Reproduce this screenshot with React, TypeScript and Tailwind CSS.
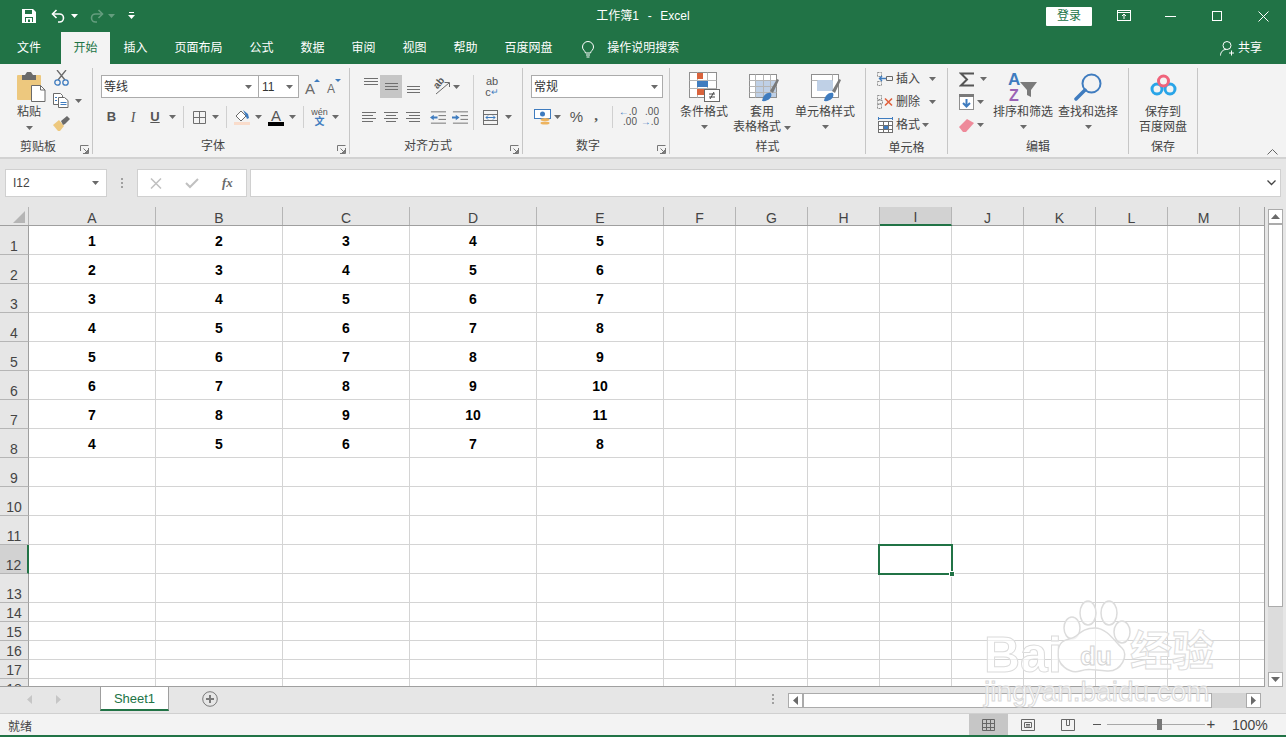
import type { ReactNode } from 'react';

const FONT = "font-['Liberation_Sans','Noto_Sans_CJK_SC',sans-serif]";
const COLS = ['A', 'B', 'C', 'D', 'E', 'F', 'G', 'H', 'I', 'J', 'K', 'L', 'M'];
const DATA = [
  [1, 2, 3, 4, 5],
  [2, 3, 4, 5, 6],
  [3, 4, 5, 6, 7],
  [4, 5, 6, 7, 8],
  [5, 6, 7, 8, 9],
  [6, 7, 8, 9, 10],
  [7, 8, 9, 10, 11],
  [4, 5, 6, 7, 8],
];
const TABS = ['插入', '页面布局', '公式', '数据', '审阅', '视图', '帮助', '百度网盘'];

function Slot({ className, children }: { className: string; children?: ReactNode }) {
  return <div className={`flex shrink-0 items-center justify-center ${className}`}>{children}</div>;
}

function Caret({ light }: { light?: boolean }) {
  return (
    <svg width="7" height="4" viewBox="0 0 7 4">
      <path d="M0 0h7L3.5 4z" fill={light ? '#ffffff' : '#6a6a6a'} />
    </svg>
  );
}

function VSep() {
  return <div className="mx-auto h-[22px] w-px bg-[#d0d0d0]" />;
}

function Launcher() {
  return (
    <svg className="absolute right-[3px] bottom-[0px]" width="9" height="9" viewBox="0 0 9 9" fill="none" stroke="#777777">
      <path d="M.5 6V.5H8.5" />
      <path d="M8.5 3V8.5H3M3.5 3.5L7.5 7.5M7.5 5V7.5H5" />
    </svg>
  );
}

function Group({ className, label, launcher, children }: { className: string; label: string; launcher?: boolean; children: ReactNode }) {
  return (
    <div className={`relative flex h-[86px] shrink-0 flex-col border-r border-[#c6c6c6] ${className}`}>
      <div className="h-[69px]">{children}</div>
      <div className={`mt-[4px] text-center text-[12px] leading-4 text-[#444444] ${launcher ? 'pr-[16px]' : ''}`}>{label}</div>
      {launcher && <Launcher />}
    </div>
  );
}

function BigBtn({ className, icon, lines, caretInline }: { className: string; icon: ReactNode; lines: string[]; caretInline?: boolean }) {
  return (
    <div className={`flex shrink-0 flex-col items-center text-[12px] leading-[15px] text-[#444444] ${className}`}>
      <div className="flex h-[34px] items-end justify-center">{icon}</div>
      <div className="mt-[3px] whitespace-nowrap">{lines[0]}</div>
      {lines[1] ? (
        <div className="flex items-center gap-[3px] whitespace-nowrap">
          {lines[1]}
          {caretInline && <Caret />}
        </div>
      ) : (
        <div className="-mt-[1px] flex h-[15px] items-center">
          <Caret />
        </div>
      )}
    </div>
  );
}

function LineIcon({ rows }: { rows: [number, number][] }) {
  return (
    <svg width="15" height={rows.length * 3 + 1} fill="#6f6f6f">
      {rows.map((r, i) => (
        <rect key={i} x={r[0]} y={i * 3 + 1} width={r[1]} height="1" />
      ))}
    </svg>
  );
}

function IndentIcon({ flip }: { flip?: boolean }) {
  return (
    <svg width="17" height="13" viewBox="0 0 17 13">
      <path d={flip ? 'M8 6.500L4 3.500V5.500H0V7.500H4V9.500z' : 'M0 6.500L4 3.500V5.500H8V7.500H4V9.500z'} fill="#3f7cbf" />
      <path d="M1 .500H17M9 4.500H17M9 8.500H17M1 12.500H17" stroke="#6f6f6f" fill="none" />
    </svg>
  );
}

function TitleBar() {
  return (
    <div className="grid h-[32px] shrink-0 grid-cols-[1fr_auto_1fr] items-center bg-[#217346] text-white">
      <div className="flex items-center pl-[22px]">
        <svg width="14" height="14" viewBox="0 0 14 14">
          <path d="M0 0h11l3 3v11H0z" fill="#ffffff" />
          <path d="M3 1h7v4H3z" fill="#217346" />
          <path d="M3 8h8v5H3z" fill="#217346" />
          <path d="M4 9h6v4H8v-2.500H6V13H4z" fill="#ffffff" />
        </svg>
        <svg className="ml-[15px]" width="15" height="14" viewBox="0 0 15 14" fill="none" stroke="#ffffff" strokeWidth="1.600">
          <path d="M5.500 1L1.500 5l4 4" />
          <path d="M2 5h6.500a4 4 0 0 1 0 8H7" />
        </svg>
        <Slot className="ml-[4px] w-[9px]">
          <Caret light />
        </Slot>
        <svg className="ml-[10px] opacity-30" width="15" height="14" viewBox="0 0 15 14" fill="none" stroke="#ffffff" strokeWidth="1.600">
          <path d="M9.500 1l4 4-4 4" />
          <path d="M13 5H6.500a4 4 0 0 0 0 8H8" />
        </svg>
        <Slot className="ml-[3px] w-[9px] opacity-30">
          <Caret light />
        </Slot>
        <svg className="ml-[12px]" width="7" height="8" viewBox="0 0 7 8" fill="#ffffff">
          <rect x="1" y="0" width="5" height="1" />
          <path d="M0 3h7L3.500 7z" />
        </svg>
      </div>
      <div className="text-[12px] leading-4 whitespace-pre [word-spacing:1px]">工作簿1  -  Excel</div>
      <div className="flex items-center justify-end">
        <div className="mr-[9px] flex h-[19px] w-[46px] items-center justify-center rounded-[1px] bg-white text-[12px] text-[#217346]">登录</div>
        <Slot className="w-[46px]">
          <svg width="14" height="12" viewBox="0 0 14 12" fill="none" stroke="#ffffff">
            <rect x=".5" y=".5" width="13" height="10" />
            <path d="M.5 2.500h13M7 9V4.500M5 6l2-2 2 2" />
          </svg>
        </Slot>
        <Slot className="w-[46px]">
          <div className="h-px w-[11px] bg-white" />
        </Slot>
        <Slot className="w-[47px]">
          <div className="h-[10px] w-[10px] border border-white" />
        </Slot>
        <Slot className="w-[46px]">
          <svg width="11" height="11" viewBox="0 0 11 11" stroke="#ffffff">
            <path d="M.5.500l10 10M10.500.500l-10 10" />
          </svg>
        </Slot>
      </div>
    </div>
  );
}

function TabRow() {
  return (
    <div className="flex h-[32px] shrink-0 items-stretch bg-[#217346] pl-[4px] text-[12px] text-white">
      <div className="flex w-[50px] items-center justify-center">文件</div>
      <div className="ml-[7px] flex w-[49px] items-center justify-center bg-[#f3f3f3] text-[#217346]">开始</div>
      {TABS.map((t) => (
        <div key={t} className="flex items-center px-[13.500px] whitespace-nowrap">
          {t}
        </div>
      ))}
      <svg className="mt-[9px] ml-[15px]" width="14" height="17" viewBox="0 0 14 17" fill="none" stroke="#ffffff">
        <path d="M4.500 12C4 9.500 1.500 9 1.500 6a5.500 5.500 0 0 1 11 0c0 3-2.500 3.500-3 6z" />
        <path d="M5 14h4M5.500 16h3" />
      </svg>
      <div className="ml-[12px] flex items-center whitespace-nowrap">操作说明搜索</div>
      <div className="ml-auto flex items-center pr-[24px]">
        <svg width="15" height="15" viewBox="0 0 15 15" fill="none" stroke="#ffffff">
          <circle cx="7" cy="4.500" r="4" />
          <path d="M.5 14.500c0-3.500 2.500-6 5.500-6M11.500 9.500v5M9 12h5" />
        </svg>
        <span className="ml-[3px]">共享</span>
      </div>
    </div>
  );
}

function ClipboardGroup() {
  return (
    <Group className="w-[93px]" label="剪贴板" launcher>
      <div className="flex pl-[17px]">
        <div className="flex w-[24px] flex-col items-center text-[12px] leading-[15px] text-[#444444]">
          <svg className="mt-[4px] ml-[5px] shrink-0" width="29" height="30" viewBox="0 0 29 30">
            <rect x="0" y="3" width="24" height="25" rx="1" fill="#edc87e" />
            <path d="M5 3h3l2-3h4l2 3h3v5H5z" fill="#6a6a6a" />
            <path d="M14.500 13.500h9l4.500 4.500v11.500H14.500z" fill="#ffffff" stroke="#6a6a6a" />
            <path d="M23.500 13.500V18H28" fill="none" stroke="#6a6a6a" />
          </svg>
          <span className="mt-[3px] whitespace-nowrap">粘贴</span>
          <div className="flex h-[15px] items-center">
            <Caret />
          </div>
        </div>
        <div className="ml-[12px] flex flex-col">
          <svg className="mt-[2px] ml-[1px]" width="15" height="16" viewBox="0 0 15 16" fill="none">
            <path d="M3 0l8 10M12 0L4 10" stroke="#6a6a6a" strokeWidth="1.300" />
            <circle cx="3.500" cy="12.500" r="2.700" stroke="#3f7cbf" strokeWidth="1.300" />
            <circle cx="11.500" cy="12.500" r="2.700" stroke="#3f7cbf" strokeWidth="1.300" />
          </svg>
          <div className="mt-[7px] flex items-center">
            <svg width="16" height="15" viewBox="0 0 16 15" fill="#ffffff" stroke="#6a6a6a">
              <path d="M.5.500h7l2 2v9H.5z" />
              <path d="M5.500 4.500h6l3.500 3v7H5.500z" />
              <path d="M2 4.500h2M2 7.500h2M7.500 9.500h6M7.500 11.500h6" stroke="#3f7cbf" />
            </svg>
            <span className="ml-[6px]">
              <Caret />
            </span>
          </div>
          <svg className="mt-[8px]" width="18" height="16" viewBox="0 0 18 16">
            <path d="M0 9l6-5 5 6-4 5H5z" fill="#edc87e" />
            <path d="M8 5l6-5 3 3-5 5-2 1z" fill="#6a6a6a" />
          </svg>
        </div>
      </div>
    </Group>
  );
}

function FontGroup() {
  return (
    <Group className="w-[257px]" label="字体" launcher>
      <div className="pl-[8px]">
        <div className="mt-[7px] flex items-center">
          <div className="flex h-[23px] w-[158px] items-center justify-between border border-[#ababab] bg-white pr-[6px] pl-[2px] text-[12px] text-[#333333]">
            等线
            <Caret />
          </div>
          <div className="-ml-px flex h-[23px] w-[41px] items-center justify-between border border-[#ababab] bg-white pr-[5px] pl-[3px] text-[12px] text-[#333333]">
            11
            <Caret />
          </div>
          <div className="relative ml-[6px] h-[16px] w-[15px] text-[#6a6a6a]">
            <span className="absolute top-[2px] left-0 text-[15px] leading-[15px]">A</span>
            <svg className="absolute top-0 right-0" width="6" height="3" viewBox="0 0 6 3">
              <path d="M0 3l3-3 3 3z" fill="#3f7cbf" />
            </svg>
          </div>
          <div className="relative ml-[7px] h-[16px] w-[14px] text-[#6a6a6a]">
            <span className="absolute top-[4px] left-0 text-[12px] leading-[12px]">A</span>
            <svg className="absolute top-0 right-0" width="6" height="3" viewBox="0 0 6 3">
              <path d="M0 0h6L3 3z" fill="#3f7cbf" />
            </svg>
          </div>
        </div>
        <div className="mt-[8px] flex h-[22px] items-center text-[#555555]">
          <Slot className="w-[21px] text-[13px] font-bold">B</Slot>
          <Slot className="w-[22px] font-['Liberation_Serif'] text-[14px] italic">I</Slot>
          <Slot className="w-[22px] text-[13px] font-bold underline">U</Slot>
          <Slot className="w-[12px]"><Caret /></Slot>
          <Slot className="w-[10px]"><VSep /></Slot>
          <Slot className="w-[22px]">
            <svg width="13" height="13" viewBox="0 0 13 13" fill="none" stroke="#6f6f6f">
              <path d="M.5.500h12v12H.5zM6.500.500v12M.5 6.500h12" />
            </svg>
          </Slot>
          <Slot className="w-[10px]"><Caret /></Slot>
          <Slot className="w-[12px]"><VSep /></Slot>
          <Slot className="w-[20px]">
            <svg width="16" height="16" viewBox="0 0 16 16">
              <path d="M2 7l5-5 5 5-5 5z" fill="#ffffff" stroke="#6a6a6a" />
              <path d="M9 1l5 4 1 4-2 1-2-5z" fill="#3f7cbf" />
              <rect x="0" y="13" width="16" height="3" fill="#f9dccb" />
            </svg>
          </Slot>
          <Slot className="w-[12px]"><Caret /></Slot>
          <Slot className="w-[24px]">
            <div className="flex w-[16px] flex-col items-center">
              <span className="h-[13px] text-[15px] leading-[13px] text-[#555555]">A</span>
              <div className="h-[4px] w-[16px] bg-black" />
            </div>
          </Slot>
          <Slot className="w-[9px]"><Caret /></Slot>
          <Slot className="w-[12px]"><VSep /></Slot>
          <Slot className="w-[21px]">
            <div className="flex flex-col items-center leading-[10px]">
              <span className="text-[9px] text-[#555555]">wén</span>
              <span className="text-[10px] font-bold text-[#3f7cbf]">文</span>
            </div>
          </Slot>
          <Slot className="w-[10px]"><Caret /></Slot>
        </div>
      </div>
    </Group>
  );
}

function AlignGroup() {
  return (
    <Group className="w-[173px]" label="对齐方式" launcher>
      <div className="pl-[12px]">
        <div className="mt-[7px] flex h-[23px]">
          <Slot className="w-[18px] items-start pt-[2px]">
            <LineIcon rows={[[0, 14], [0, 14], [0, 14]]} />
          </Slot>
          <Slot className="w-[22px] bg-[#c6c6c6]">
            <LineIcon rows={[[1, 13], [1, 13], [1, 13]]} />
          </Slot>
          <Slot className="w-[22px] items-end pb-[3px]">
            <LineIcon rows={[[1, 13], [1, 13], [1, 13]]} />
          </Slot>
          <Slot className="ml-[6px] w-[21px]">
            <div className="relative h-[18px] w-[18px] text-[#555555]">
              <span className="absolute top-0 left-[1px] origin-center -rotate-[50deg] text-[10px] leading-[10px] font-bold">ab</span>
              <svg className="absolute top-[2px] left-[3px]" width="15" height="15" viewBox="0 0 15 15" fill="none" stroke="#6a6a6a">
                <path d="M1 14L14 3M9.500 2.500H14.500V7" />
              </svg>
            </div>
          </Slot>
          <Slot className="w-[10px]"><Caret /></Slot>
          <Slot className="w-[24px]"><div className="h-[55px] w-px translate-y-[16px] bg-[#d0d0d0]" /></Slot>
          <Slot className="w-[14px] flex-col text-[#555555]">
            <span className="text-[11px] leading-[11px]">ab</span>
            <span className="flex items-center text-[11px] leading-[11px]">c<span className="text-[9px] text-[#3f7cbf]">↵</span></span>
          </Slot>
        </div>
        <div className="mt-[8px] flex h-[22px] items-center">
          <Slot className="w-[14px]"><LineIcon rows={[[0, 14], [0, 11], [0, 14], [0, 11]]} /></Slot>
          <Slot className="ml-[8px] w-[14px]"><LineIcon rows={[[0, 14], [2, 10], [0, 14], [2, 10]]} /></Slot>
          <Slot className="ml-[8px] w-[14px]"><LineIcon rows={[[0, 14], [3, 11], [0, 14], [3, 11]]} /></Slot>
          <Slot className="ml-[10px] w-[16px]"><IndentIcon /></Slot>
          <Slot className="ml-[6px] w-[16px]"><IndentIcon flip /></Slot>
          <Slot className="ml-[15px] w-[15px]">
            <svg width="15" height="15" viewBox="0 0 15 15" fill="none" stroke="#6f6f6f">
              <rect x=".5" y=".5" width="14" height="14" />
              <path d="M.5 4.500h14M.5 10.500h14" />
              <path d="M3 7.500h9M5 5.500l-2 2 2 2M10 5.500l2 2-2 2" stroke="#3f7cbf" />
            </svg>
          </Slot>
          <Slot className="ml-[6px] w-[8px]"><Caret /></Slot>
        </div>
      </div>
    </Group>
  );
}

function NumberGroup() {
  return (
    <Group className="w-[147px]" label="数字" launcher>
      <div className="pl-[8px]">
        <div className="mt-[7px] flex h-[23px] w-[132px] items-center justify-between border border-[#ababab] bg-white pr-[4px] pl-[2px] text-[12px] text-[#333333]">
          常规
          <Caret />
        </div>
        <div className="mt-[8px] flex h-[22px] items-center">
          <Slot className="ml-[3px] w-[17px]">
            <svg width="17" height="16" viewBox="0 0 17 16">
              <rect x=".5" y=".5" width="16" height="9" fill="#ffffff" stroke="#3f7cbf" />
              <circle cx="8.500" cy="5" r="2.500" fill="#3f7cbf" />
              <ellipse cx="11" cy="10.500" rx="4.500" ry="1.500" fill="#edb35e" />
              <ellipse cx="11" cy="14" rx="4.500" ry="1.500" fill="#edb35e" />
            </svg>
          </Slot>
          <Slot className="ml-[3px] w-[7px]"><Caret /></Slot>
          <Slot className="ml-[8px] w-[15px] text-[15px] text-[#555555]">%</Slot>
          <Slot className="ml-[7px] w-[10px] -translate-y-[2px] font-['Liberation_Serif'] text-[15px] font-bold text-[#555555]">,</Slot>
          <Slot className="ml-[11px] w-[1px]"><VSep /></Slot>
          <Slot className="ml-[6px] w-[18px] flex-col text-[10px] leading-[10px] text-[#555555]">
            <span className="self-end"><span className="text-[#3f7cbf]">←</span>.0</span>
            <span className="self-end">.00</span>
          </Slot>
          <Slot className="ml-[4px] w-[18px] flex-col text-[10px] leading-[10px] text-[#555555]">
            <span className="self-end">.00</span>
            <span className="self-end"><span className="text-[#3f7cbf]">→</span>.0</span>
          </Slot>
        </div>
      </div>
    </Group>
  );
}

function StylesGroup() {
  return (
    <Group className="w-[196px]" label="样式">
      <div className="flex pl-[9px]">
        <BigBtn
          className="w-[50px]"
          lines={['条件格式']}
          icon={
            <svg width="31" height="30" viewBox="0 0 31 30">
              <rect x=".5" y=".5" width="27" height="25" fill="#ffffff" stroke="#8f8f8f" />
              <path d="M.5 8.500h27M.5 16.500h27M8.500.500v25M18.500.500v25" stroke="#b5b5b5" />
              <rect x="8" y="1" width="6" height="6" fill="#d9633c" />
              <rect x="8" y="9" width="11" height="6" fill="#3f7cbf" />
              <rect x="8" y="17" width="9" height="6" fill="#d9633c" />
              <rect x="15.500" y="17.500" width="15" height="12" fill="#ffffff" stroke="#6a6a6a" />
              <path d="M20 22h6M20 25h6M25 20l-4 7" stroke="#444444" fill="none" />
            </svg>
          }
        />
        <BigBtn
          className="ml-[4px] w-[58px]"
          lines={['套用', '表格格式']}
          caretInline
          icon={
            <svg className="translate-x-[2px]" width="30" height="30" viewBox="0 0 30 30">
              <rect x=".5" y="2.500" width="27" height="23" fill="#ffffff" stroke="#8f8f8f" />
              <rect x="6" y="8" width="21" height="17" fill="#bfd0e6" />
              <path d="M.5 8.500h27M.5 14.500h27M.5 20.500h27M6.500 2.500v23M14.500 2.500v23M21.500 2.500v23" stroke="#b5b5b5" />
              <path d="M21 19l7-12 2 1-6 13z" fill="#7a7a7a" />
              <path d="M13 29c1-6 5-9 9-8 2 4-3 9-9 8z" fill="#3f7cbf" />
            </svg>
          }
        />
        <BigBtn
          className="ml-[4px] w-[60px]"
          lines={['单元格样式']}
          icon={
            <svg className="translate-x-[1px]" width="30" height="30" viewBox="0 0 30 30">
              <rect x=".5" y="2.500" width="27" height="23" fill="#ffffff" stroke="#8f8f8f" />
              <rect x="6" y="8" width="16" height="11" fill="#bfd0e6" />
              <path d="M.5 8.500h6M21.500 2.500v6" stroke="#b5b5b5" />
              <path d="M21 19l7-12 2 1-6 13z" fill="#7a7a7a" />
              <path d="M13 29c1-6 5-9 9-8 2 4-3 9-9 8z" fill="#3f7cbf" />
            </svg>
          }
        />
      </div>
    </Group>
  );
}

function CellRow({ icon, label, caretClass }: { icon: ReactNode; label: string; caretClass: string }) {
  return (
    <div className="flex h-[23px] items-center text-[12px] text-[#444444]">
      <Slot className="w-[16px]">{icon}</Slot>
      <span className="ml-[3px] whitespace-nowrap">{label}</span>
      <span className={`flex ${caretClass}`}>
        <Caret />
      </span>
    </div>
  );
}

function CellsGroup() {
  return (
    <Group className="w-[82px]" label="单元格">
      <div className="-mt-px pl-[11px]">
        <CellRow
          label="插入"
          caretClass="ml-[9px]"
          icon={
            <svg width="16" height="14" viewBox="0 0 16 14" fill="none">
              <path d="M.5.500h4v4h-4zM.5 9.500h4v4h-4z" stroke="#8f8f8f" strokeDasharray="2 1" />
              <path d="M9.500 4.500h6v4h-6z" stroke="#6a6a6a" />
              <path d="M9 6.500H2.500M5 4L2.500 6.500 5 9" stroke="#3f7cbf" strokeWidth="1.400" />
            </svg>
          }
        />
        <CellRow
          label="删除"
          caretClass="ml-[9px]"
          icon={
            <svg width="16" height="14" viewBox="0 0 16 14" fill="none">
              <path d="M.5.500h4v4h-4zM.5 9.500h4v4h-4zM.5 5.500h5v3h-5z" stroke="#8f8f8f" strokeDasharray="2 1" />
              <path d="M8 3.500l7 7M15 3.500l-7 7" stroke="#e0603c" strokeWidth="1.600" />
            </svg>
          }
        />
        <CellRow
          label="格式"
          caretClass="ml-[2px]"
          icon={
            <svg width="15" height="16" viewBox="0 0 15 16" fill="none" stroke="#6f6f6f">
              <path d="M.5 1.500h14M.5 0v3M14.500 0v3" stroke="#3f7cbf" />
              <rect x=".5" y="4.500" width="14" height="11" fill="#ffffff" />
              <path d="M.5 8.500h14M.5 12.500h14M5.500 4.500v11M10.500 4.500v11" />
              <rect x="6" y="9" width="4" height="3" fill="#3f7cbf" stroke="none" />
            </svg>
          }
        />
      </div>
    </Group>
  );
}

function EditGroup() {
  return (
    <Group className="w-[181px]" label="编辑">
      <div className="flex pl-[11px]">
        <div className="flex w-[35px] flex-col">
          <div className="mt-[1px] flex h-[20px] items-center">
            <svg width="16" height="15" viewBox="0 0 16 15" fill="none" stroke="#555555" strokeWidth="2">
              <path d="M15 1.500H2L8 7.500l-6 6h13" />
            </svg>
            <span className="ml-[5px] flex"><Caret /></span>
          </div>
          <div className="mt-[3px] flex h-[20px] items-center">
            <svg width="15" height="16" viewBox="0 0 15 16">
              <rect x=".5" y=".5" width="14" height="15" fill="#ffffff" stroke="#8f8f8f" />
              <rect x="0" y="0" width="15" height="3" fill="#7a7a7a" />
              <path d="M7.500 5v7M4 9l3.500 3.500L11 9" fill="none" stroke="#3f7cbf" strokeWidth="2" />
            </svg>
            <span className="ml-[3px] flex"><Caret /></span>
          </div>
          <div className="mt-[3px] flex h-[20px] items-center">
            <svg width="15" height="13" viewBox="0 0 15 13">
              <path d="M0 8l8-8 7 4-8 9H4z" fill="#ee8a9a" />
            </svg>
            <span className="ml-[3px] flex"><Caret /></span>
          </div>
        </div>
        <BigBtn
          className="w-[62px] -translate-x-[2px]"
          lines={['排序和筛选']}
          icon={
            <div className="relative h-[30px] w-[30px]">
              <span className="absolute top-0 left-0 text-[17px] leading-[16px] font-bold text-[#3f7cbf]">A</span>
              <span className="absolute top-[17px] left-[1px] text-[16px] leading-[13px] font-bold text-[#9a62b5]">Z</span>
              <svg className="absolute top-0 left-0" width="30" height="30" viewBox="0 0 30 30">
                <path d="M12 10h17l-6 8v7l-4-2v-5z" fill="#7a7a7a" />
              </svg>
            </div>
          }
        />
        <BigBtn
          className="ml-[1px] w-[62px]"
          lines={['查找和选择']}
          icon={
            <svg width="28" height="29" viewBox="0 0 28 29" fill="none" stroke="#3f7cbf">
              <circle cx="17.500" cy="10.500" r="9" strokeWidth="2" />
              <path d="M11 17L2 26" strokeWidth="3.500" strokeLinecap="round" />
            </svg>
          }
        />
      </div>
    </Group>
  );
}

function SaveGroup() {
  return (
    <Group className="w-[69px]" label="保存">
      <BigBtn
        className="w-[68px]"
        lines={['保存到', '百度网盘']}
        icon={
          <svg className="mb-[6px]" width="27" height="22" viewBox="0 0 27 22" fill="none" strokeWidth="3">
            <circle cx="7" cy="15" r="5" stroke="#2aa5e8" />
            <circle cx="20" cy="15" r="5" stroke="#2aa5e8" />
            <circle cx="13.500" cy="7" r="5" stroke="#f0637b" />
          </svg>
        }
      />
    </Group>
  );
}

function Ribbon() {
  return (
    <div className="relative flex h-[95px] shrink-0 border-b-2 border-[#d2d2d2] bg-[#f3f3f3] pt-[4px]">
      <ClipboardGroup />
      <FontGroup />
      <AlignGroup />
      <NumberGroup />
      <StylesGroup />
      <CellsGroup />
      <EditGroup />
      <SaveGroup />
      <svg className="absolute right-[8px] bottom-[2px]" width="11" height="6" viewBox="0 0 11 6" fill="none" stroke="#666666">
        <path d="M.5 5.500l5-5 5 5" />
      </svg>
    </div>
  );
}

function FormulaBar() {
  return (
    <div className="flex h-[48px] shrink-0 items-start bg-[#e6e6e6] pt-[10px]">
      <div className="ml-[5px] flex h-[28px] w-[102px] items-center justify-between border border-[#d0d0d0] bg-white pr-[7px] pl-[7px] text-[12px] text-[#444444]">
        I12
        <Caret />
      </div>
      <Slot className="h-[28px] w-[30px] flex-col gap-[2px]">
        <div className="h-[2px] w-[2px] bg-[#a0a0a0]" />
        <div className="h-[2px] w-[2px] bg-[#a0a0a0]" />
        <div className="h-[2px] w-[2px] bg-[#a0a0a0]" />
      </Slot>
      <div className="flex h-[28px] w-[110px] items-center border border-[#d0d0d0] bg-white">
        <svg className="ml-[12px]" width="12" height="11" viewBox="0 0 12 11" fill="none" stroke="#c0c0c0" strokeWidth="1.500">
          <path d="M1 .5l10 10M11 .5l-10 10" />
        </svg>
        <svg className="ml-[23px]" width="14" height="11" viewBox="0 0 14 11" fill="none" stroke="#c0c0c0" strokeWidth="2">
          <path d="M1 5l4 4 8-8" />
        </svg>
        <span className="ml-[23px] font-['Liberation_Serif'] text-[13px] font-bold text-[#6a6a6a] italic">fx</span>
      </div>
      <div className="ml-[3px] flex h-[28px] w-[1031px] items-center justify-end border border-[#d0d0d0] bg-white pr-[4px]">
        <svg width="9" height="6" viewBox="0 0 9 6" fill="none" stroke="#444444" strokeWidth="1.300">
          <path d="M.5.500l4 4 4-4" />
        </svg>
      </div>
    </div>
  );
}

const colW = (i: number) => (i < 5 ? 'w-[127px]' : 'w-[72px]');

function Sheet() {
  const rows = Array.from({ length: 18 }, (_, i) => i + 1);
  return (
    <div className="relative flex h-[480px] w-[1265px] shrink-0 flex-col overflow-hidden border-r border-b border-[#a0a0a0] bg-white">
      <div className="flex h-[19px] shrink-0 border-b border-[#9f9f9f] bg-[#e6e6e6]">
        <div className="flex w-[29px] shrink-0 items-end justify-end border-r border-[#b5b5b5] pr-[3px] pb-[2px]">
          <div className="h-0 w-0 border-b-[12px] border-l-[12px] border-b-[#b5b5b5] border-l-transparent" />
        </div>
        {COLS.map((c, i) => (
          <div
            key={c}
            className={`flex shrink-0 items-center justify-center border-r border-[#b5b5b5] pt-[4px] text-[14px] leading-[15px] text-[#444444] ${colW(i)} ${c === 'I' ? '-mb-px border-b-2 border-b-[#217346] bg-[#d2d2d2]' : ''}`}
          >
            {c}
          </div>
        ))}
        <div className="flex-1" />
      </div>
      {rows.map((r) => (
        <div key={r} className={`flex shrink-0 ${r <= 13 ? 'h-[29px]' : 'h-[19px]'}`}>
          <div
            className={`flex w-[29px] shrink-0 items-end justify-center border-r border-b border-r-[#9f9f9f] text-[14px] leading-4 text-[#444444] ${r === 12 ? 'border-r-2 border-b-[#b5b5b5] border-r-[#217346] bg-[#d2d2d2]' : 'border-b-[#b5b5b5] bg-[#e6e6e6]'}`}
          >
            {r}
          </div>
          {COLS.map((c, i) => (
            <div
              key={c}
              className={`flex shrink-0 items-center justify-center border-r border-b border-[#d4d4d4] pt-[3px] text-[14px] font-bold text-black ${colW(i)}`}
            >
              {DATA[r - 1]?.[i]}
            </div>
          ))}
          <div className="flex-1 border-b border-[#d4d4d4]" />
        </div>
      ))}
      {/* active cell I12 */}
      <div className="absolute top-[337px] left-[878px] h-[31px] w-[75px] border-2 border-[#217346]">
        <div className="absolute -right-[4px] -bottom-[4px] h-[6px] w-[6px] border border-white bg-[#217346]" />
      </div>
    </div>
  );
}

function ScrollButton({ dir }: { dir: 'up' | 'down' | 'left' | 'right' }) {
  const path = { up: 'M0 5h9L4.500 0z', down: 'M0 0h9L4.500 5z', left: 'M5 0v9L0 4.500z', right: 'M0 0v9l5-4.500z' }[dir];
  return (
    <div className="flex h-[15px] w-[15px] shrink-0 items-center justify-center border border-[#ababab] bg-white">
      <svg width="9" height="9" viewBox="0 0 9 9" className="overflow-visible">
        <path d={path} fill="#6a6a6a" transform={dir === 'up' || dir === 'down' ? 'translate(0 2)' : 'translate(2 0)'} />
      </svg>
    </div>
  );
}

function VScroll() {
  return (
    <div className="ml-[3px] flex h-[480px] w-[15px] flex-col pt-[2px]">
      <ScrollButton dir="up" />
      <div className="flex flex-1 flex-col bg-[#dcdcdc]">
        <div className="h-[383px] w-[15px] border border-[#ababab] bg-white" />
      </div>
      <ScrollButton dir="down" />
    </div>
  );
}

function SheetBar() {
  return (
    <div className="flex h-[27px] shrink-0 items-start border-b border-[#d0d0d0] bg-[#e6e6e6]">
      <Slot className="h-[24px] w-[100px] justify-start">
        <svg className="ml-[27px]" width="34" height="9" viewBox="0 0 34 9" fill="#c6c6c6">
          <path d="M5 0v9L0 4.500z" />
          <path d="M29 0v9l5-4.500z" />
        </svg>
      </Slot>
      <div className="flex h-[24px] w-[69px] items-center justify-center border-x border-b-2 border-x-[#9f9f9f] border-b-[#217346] bg-white pt-[2px] text-[13px] text-[#217346]">
        Sheet1
      </div>
      <svg className="mt-[4px] ml-[33px]" width="16" height="16" viewBox="0 0 16 16" fill="none" stroke="#7a7a7a">
        <circle cx="8" cy="8" r="7.300" />
        <path d="M8 4v8M4 8h8" strokeWidth="2" />
      </svg>
      <Slot className="mt-[4px] ml-[553px] h-[16px] w-[3px] flex-col gap-[2px]">
        <div className="h-[2px] w-[2px] bg-[#a0a0a0]" />
        <div className="h-[2px] w-[2px] bg-[#a0a0a0]" />
        <div className="h-[2px] w-[2px] bg-[#a0a0a0]" />
      </Slot>
      <div className="mt-[6px] ml-[14px] flex h-[15px] w-[473px] bg-[#d4d4d4]">
        <ScrollButton dir="left" />
        <div className="h-[15px] w-[409px] border border-[#ababab] bg-white" />
        <div className="flex-1" />
        <ScrollButton dir="right" />
      </div>
    </div>
  );
}

function StatusBar() {
  return (
    <div className="flex h-[23px] shrink-0 items-stretch border-b-2 border-[#217346] bg-[#f3f3f3] text-[12px] text-[#444444]">
      <div className="flex items-center pt-[4px] pl-[8px]">就绪</div>
      <div className="ml-auto flex items-center">
        <Slot className="h-[21px] w-[39px] bg-[#c6c6c6]">
          <svg width="13" height="12" viewBox="0 0 13 12" fill="none" stroke="#666666">
            <path d="M.5.500h12v11H.5zM4.500.500v11M8.500.500v11M.5 4.500h12M.5 8.500h12" />
          </svg>
        </Slot>
        <Slot className="h-[21px] w-[40px]">
          <svg width="14" height="12" viewBox="0 0 14 12" fill="none" stroke="#666666">
            <path d="M.5.500h13v11H.5zM3.500 3.500h7v5h-7zM5 5.500h4M5 7h4" />
          </svg>
        </Slot>
        <Slot className="h-[21px] w-[40px]">
          <svg width="14" height="12" viewBox="0 0 14 12" fill="none" stroke="#666666">
            <path d="M.5.500h13v11H.5zM5.500.500v6h3v-6" />
          </svg>
        </Slot>
        <div className="ml-[5px] h-px w-[8px] bg-[#555555]" />
        <div className="relative ml-[6px] h-px w-[98px] bg-[#a8a8a8]">
          <div className="absolute top-[-5px] left-[50px] h-[11px] w-[5px] bg-[#777777]" />
        </div>
        <Slot className="h-[21px] w-[12px] text-[15px] font-light">+</Slot>
        <div className="ml-[15px] w-[38px] pt-[2px] text-[14px]">100%</div>
        <div className="w-[16px]" />
      </div>
    </div>
  );
}

function Watermark() {
  return (
    <div className={`pointer-events-none absolute top-[598px] left-[984px] h-[112px] w-[234px] ${FONT}`}>
      <svg className="absolute top-0 left-[56px]" width="100" height="78" viewBox="0 0 100 78" fill="#ffffff" fillOpacity="0.6" stroke="#dcdcdc" strokeWidth="1.500">
        <ellipse cx="48" cy="15" rx="8" ry="12" />
        <ellipse cx="69" cy="15" rx="8" ry="12" />
        <ellipse cx="32" cy="30" rx="8" ry="11" />
        <ellipse cx="82" cy="34" rx="8" ry="11" />
        <path d="M55 30c12 0 20 14 27 20s0 24-15 23-17-3-27 0-24-6-22-20 12-10 18-15 10-8 19-8z" />
      </svg>
      <div className="absolute top-[39px] left-0 text-[50px] leading-[36px] font-bold text-white/60 [-webkit-text-stroke:1px_#dcdcdc]">Bai</div>
      <div className="absolute top-[45px] left-[96px] text-[26px] leading-[26px] font-bold text-white/40 [-webkit-text-stroke:1px_#d4d4d4]">du</div>
      <div className="absolute top-[34px] left-[146px] text-[42px] leading-[40px] font-bold text-white/70 [-webkit-text-stroke:1px_#dcdcdc]">经验</div>
      <div className="absolute top-[80px] left-0 text-[28px] leading-[28px] text-white/70 [-webkit-text-stroke:1px_#d8d8d8]">jingyan.baidu.com</div>
    </div>
  );
}

export default function App() {
  return (
    <div className={`relative flex h-screen w-full flex-col overflow-hidden bg-[#e6e6e6] ${FONT}`}>
      <TitleBar />
      <TabRow />
      <Ribbon />
      <FormulaBar />
      <div className="flex shrink-0">
        <Sheet />
        <VScroll />
      </div>
      <SheetBar />
      <StatusBar />
      <Watermark />
    </div>
  );
}
